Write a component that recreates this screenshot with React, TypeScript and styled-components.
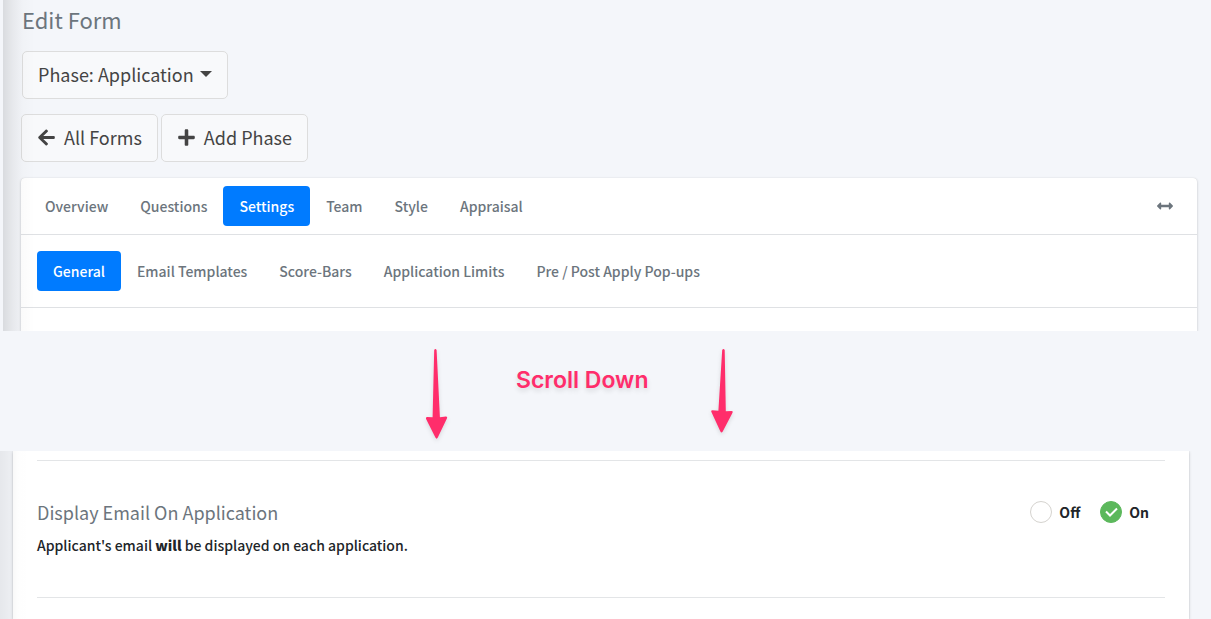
import React, { useState } from "react";
import styled, { createGlobalStyle, css } from "styled-components";
import { FaArrowLeft, FaPlus, FaArrowsAltH } from "react-icons/fa";

const GlobalStyle = createGlobalStyle`
  *, *::before, *::after { box-sizing: border-box; }
  body {
    margin: 0;
    background: #f4f6fa;
    color: #212529;
    font-family: "Noto Sans CJK SC", "Open Sans", sans-serif;
    font-size: 14px;
    line-height: 24px;
  }
  h1, h2, p { margin: 0; font-weight: 400; }
  button, input { font: inherit; }
`;

const Page = styled.main`
  display: flex;
  flex-direction: column;
  min-height: 100vh;
`;

const Pane = styled.section<{ $edge: string }>`
  position: relative;
  display: flex;
  flex-direction: column;
  overflow: hidden;
  &::before {
    content: "";
    position: absolute;
    inset: 0 auto 0 0;
    width: 32px;
    background: linear-gradient(to right, ${(p) => p.$edge});
    pointer-events: none;
    z-index: 1;
  }
`;

const TopPane = styled(Pane)`
  margin-left: 3px;
  padding: 3px 14px 0 18px;
`;

const BottomPane = styled(Pane)`
  flex: 1;
  padding: 0 22px 0 13px;
`;

const Title = styled.h1`
  color: #6c757d;
  font-size: 22px;
  line-height: 32px;
`;

const Toolbar = styled.div`
  display: flex;
  gap: 3px;
`;

const Heading = styled.header`
  display: flex;
  flex-direction: column;
  align-items: flex-start;
  gap: 16px;
  padding-left: 1px;
`;

const Actions = styled(Toolbar)`
  margin: 15px 0 16px;
`;

const Button = styled.button<{ $gap?: number }>`
  display: flex;
  align-items: center;
  gap: ${(p) => p.$gap ?? 8}px;
  height: 48px;
  padding: 0 15px 2px;
  border: 1px solid #dddddd;
  border-radius: 5px;
  background: #f8f9fb;
  color: #444444;
  font-size: 18px;
  line-height: 30px;
  white-space: nowrap;
`;

const Caret = styled.span`
  border: 6px solid transparent;
  border-top-color: currentColor;
  border-bottom: 0;
`;

const card = css`
  background: #ffffff;
  box-shadow: 0 0 1px rgba(0, 0, 0, 0.15), 0 1px 3px rgba(0, 0, 0, 0.18);
`;

const Card = styled.div`
  ${card}
  border-radius: 4px 4px 0 0;
`;

const CardRow = styled.div<{ $pad: number }>`
  display: flex;
  align-items: center;
  justify-content: space-between;
  padding: ${(p) => p.$pad}px;
  border-bottom: 1px solid #dfe1e4;
`;

const CardEnd = styled.div`
  height: 23px;
`;

const Nav = styled.nav`
  display: flex;
`;

const Tab = styled.a<{ $active?: boolean }>`
  padding: 8px 16px;
  border-radius: 4px;
  background: ${(p) => (p.$active ? "#007bff" : "transparent")};
  color: ${(p) => (p.$active ? "#ffffff" : "#6c757d")};
  font-weight: 500;
  text-decoration: none;
  white-space: nowrap;
`;

const IconButton = styled.button`
  display: flex;
  padding: 8px 16px;
  border: 0;
  background: none;
  color: #6c757d;
`;

const ScrollHint = styled.div`
  display: grid;
  grid-template-columns: 426px 90px 133px 62px 22px;
  height: 120px;
  padding-top: 18px;
  color: #ff2d6b;
`;

const HintText = styled.p`
  grid-column: 3;
  padding-top: 17px;
  font-family: Inter, sans-serif;
  font-size: 23px;
  font-weight: 600;
  line-height: 28px;
  white-space: nowrap;
  text-shadow: 0 3px 5px rgba(0, 0, 0, 0.12);
`;

const Arrow = styled.svg<{ $column: number }>`
  grid-column: ${(p) => p.$column};
  grid-row: 1;
  overflow: visible;
  filter: drop-shadow(0 2px 2px rgba(0, 0, 0, 0.12));
`;

const Body = styled.div`
  ${card}
  flex: 1;
  padding: 9px 24px 0;
`;

const Setting = styled.div`
  display: flex;
  justify-content: space-between;
  align-items: flex-start;
  height: 138px;
  padding: 37px 16px 0 0;
  border: solid #e3e5e7;
  border-width: 1px 0;
`;

const SettingTitle = styled.h2`
  color: #6c757d;
  font-size: 18px;
  line-height: 28px;
  margin-bottom: 7px;
`;

const Description = styled.p`
  font-weight: 500;
  strong { font-weight: 900; }
`;

const Options = styled.div`
  display: flex;
  gap: 20px;
  padding-top: 2px;
`;

const Option = styled.label`
  display: flex;
  align-items: center;
  gap: 7px;
  font-weight: 700;
`;

const RadioMark = styled.span`
  display: grid;
  > * { grid-area: 1 / 1; }
`;

const Radio = styled.input`
  appearance: none;
  width: 22px;
  height: 22px;
  margin: 0;
  border: 1px solid #d5d3cf;
  border-radius: 50%;
  background: #ffffff;
  &:checked {
    border-color: #5cb85c;
    background: #5cb85c;
  }
`;

const Check = styled.svg`
  pointer-events: none;
`;

const mainTabs = ["Overview", "Questions", "Settings", "Team", "Style", "Appraisal"];
const settingTabs = [
  "General",
  "Email Templates",
  "Score-Bars",
  "Application Limits",
  "Pre / Post Apply Pop-ups",
];

function Tabs({ items, active, label }: { items: string[]; active: string; label: string }) {
  return (
    <Nav aria-label={label}>
      {items.map((item) => (
        <Tab key={item} href="#" $active={item === active}>
          {item}
        </Tab>
      ))}
    </Nav>
  );
}

export default function App() {
  const [display, setDisplay] = useState("On");
  return (
    <Page>
      <GlobalStyle />
      <TopPane $edge="rgba(0,0,0,.11), rgba(0,0,0,.055) 30%, rgba(0,0,0,.015) 60%, transparent">
        <Heading>
          <Title>Edit Form</Title>
          <Button type="button" $gap={6}>
            Phase: Application
            <Caret />
          </Button>
        </Heading>
        <Actions>
          <Button type="button">
            <FaArrowLeft size={19} />
            All Forms
          </Button>
          <Button type="button">
            <FaPlus size={19} />
            Add Phase
          </Button>
        </Actions>
        <Card>
          <CardRow $pad={8}>
            <Tabs items={mainTabs} active="Settings" label="Form" />
            <IconButton type="button" aria-label="Toggle width">
              <FaArrowsAltH size={16} />
            </IconButton>
          </CardRow>
          <CardRow $pad={16}>
            <Tabs items={settingTabs} active="General" label="Settings" />
          </CardRow>
          <CardEnd />
        </Card>
      </TopPane>

      <ScrollHint>
        <Arrow $column={2} width="22" height="90" viewBox="0 0 22 90" fill="currentColor" aria-hidden="true">
          <path d="M8.2 1Q9.4-.8 10.6 1L13.9 68.2 19.8 67.6Q21.8 67.6 20.9 69.4L11.8 88.6Q10.6 90.8 9.4 88.6L.2 70.2Q-.6 68.3 1.2 68.1L6.6 68.3Z" />
        </Arrow>
        <HintText>Scroll Down</HintText>
        <Arrow $column={5} width="22" height="84" viewBox="0 0 22 84" fill="currentColor" aria-hidden="true">
          <path d="M11.2 1Q12.5-1.2 13.7 1L14.8 62.2 20.4 62Q22.4 62 21.4 63.9L11.6 82.8Q10.4 84.4 9.4 82.6L.4 62.9Q-.3 61.2 1.4 61.2L7.4 61.8Z" />
        </Arrow>
      </ScrollHint>

      <BottomPane $edge="rgba(0,0,0,.06), rgba(0,0,0,.03) 35%, rgba(0,0,0,.005) 60%, transparent">
        <Body>
          <Setting>
            <div>
              <SettingTitle>Display Email On Application</SettingTitle>
              <Description>
                Applicant's email <strong>will</strong> be displayed on each application.
              </Description>
            </div>
            <Options role="radiogroup" aria-label="Display Email On Application">
              {["Off", "On"].map((value) => (
                <Option key={value}>
                  <RadioMark>
                    <Radio
                      type="radio"
                      name="display-email"
                      checked={display === value}
                      onChange={() => setDisplay(value)}
                    />
                    {display === value && (
                      <Check width="22" height="22" viewBox="0 0 22 22" fill="none" stroke="#fff" strokeWidth="2" aria-hidden="true">
                        <path d="M6 10.5 10 14.5 17 7.5" />
                      </Check>
                    )}
                  </RadioMark>
                  {value}
                </Option>
              ))}
            </Options>
          </Setting>
        </Body>
      </BottomPane>
    </Page>
  );
}
